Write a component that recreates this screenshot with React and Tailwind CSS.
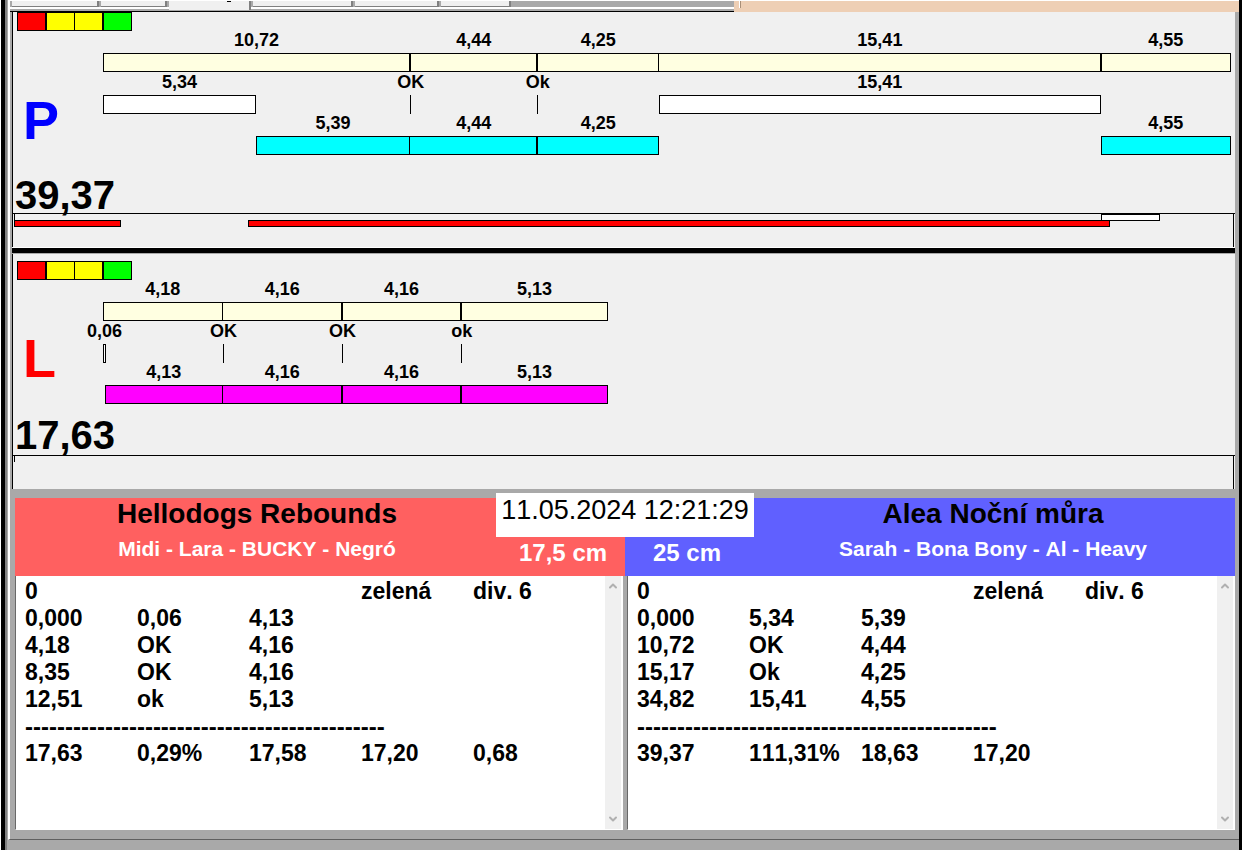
import { ChevronDown, ChevronUp } from "lucide-react";

const TOTAL_SECONDS = 39.37;
const STRIP_UNITS = 1220;

const DASHES = "-".repeat(45);

const lanes = [
  {
    name: "P",
    color: "text-[#0000ff]",
    letterSpace: "pt-16",
    lightSpace: "",
    total: "39,37",
    totalSpace: "h-[58px] pt-5",
    rows: [
      {
        fill: "bg-[#ffffe1]",
        items: [
          { seconds: 10.72, label: "10,72" },
          { seconds: 4.44, label: "4,44" },
          { seconds: 4.25, label: "4,25" },
          { seconds: 15.41, label: "15,41", joined: true },
          { seconds: 4.55, label: "4,55" },
        ],
      },
      {
        fill: "bg-white",
        items: [
          { seconds: 5.34, label: "5,34" },
          { seconds: 5.38, gap: true },
          { tick: true, label: "OK" },
          { seconds: 4.44, gap: true },
          { tick: true, label: "Ok" },
          { seconds: 4.25, gap: true },
          { seconds: 15.41, label: "15,41" },
        ],
      },
      {
        fill: "bg-[#00ffff]",
        items: [
          { seconds: 5.34, gap: true },
          { seconds: 5.38, label: "5,39" },
          { seconds: 4.44, label: "4,44", joined: true },
          { seconds: 4.25, label: "4,25" },
          { seconds: 15.41, gap: true },
          { seconds: 4.55, label: "4,55" },
        ],
      },
    ],
    upper: [{ start: 1088, end: 1147 }],
    lower: [
      { start: 0, end: 107 },
      { start: 234, end: 1097 },
    ],
  },
  {
    name: "L",
    color: "text-[#ff0000]",
    letterSpace: "pt-[53px]",
    lightSpace: "pt-[7px]",
    total: "17,63",
    totalSpace: "h-[51px] pt-[11px]",
    rows: [
      {
        fill: "bg-[#ffffe1]",
        items: [
          { seconds: 4.18, label: "4,18" },
          { seconds: 4.16, label: "4,16", joined: true },
          { seconds: 4.16, label: "4,16" },
          { seconds: 5.13, label: "5,13" },
        ],
      },
      {
        fill: "bg-white",
        items: [
          { seconds: 0.06, label: "0,06" },
          { seconds: 4.08, gap: true },
          { tick: true, label: "OK" },
          { seconds: 4.16, gap: true },
          { tick: true, label: "OK" },
          { seconds: 4.16, gap: true },
          { tick: true, label: "ok" },
        ],
      },
      {
        fill: "bg-[#ff00ff]",
        items: [
          { seconds: 0.06, gap: true },
          { seconds: 4.12, label: "4,13" },
          { seconds: 4.16, label: "4,16", joined: true },
          { seconds: 4.16, label: "4,16" },
          { seconds: 5.13, label: "5,13" },
        ],
      },
    ],
    upper: [],
    lower: [],
  },
];

const teams = [
  {
    name: "Hellodogs Rebounds",
    dogs: "Midi - Lara - BUCKY - Negró",
    jump: "17,5 cm",
    rows: [
      ["0", "", "", "zelená", "div. 6"],
      ["0,000", "0,06", "4,13", "", ""],
      ["4,18", "OK", "4,16", "", ""],
      ["8,35", "OK", "4,16", "", ""],
      ["12,51", "ok", "5,13", "", ""],
    ],
    totals: ["17,63", "0,29%", "17,58", "17,20", "0,68"],
  },
  {
    name: "Alea Noční můra",
    dogs: "Sarah - Bona Bony - Al - Heavy",
    jump: "25 cm",
    rows: [
      ["0", "", "", "zelená", "div. 6"],
      ["0,000", "5,34", "5,39", "", ""],
      ["10,72", "OK", "4,44", "", ""],
      ["15,17", "Ok", "4,25", "", ""],
      ["34,82", "15,41", "4,55", "", ""],
    ],
    totals: ["39,37", "111,31%", "18,63", "17,20", ""],
  },
];

function TabStrip() {
  const tab = "h-[6px] bg-[#f0f0f0] border-b border-r-2 border-[#808080]";
  return (
    <div className="flex h-3 border-t border-white">
      <div className="w-[724px] border-b border-black bg-[#a9a9a9]">
        <div className="flex h-[6px] gap-[2px] pl-[2px]">
          <div className={`${tab} w-[87px]`} />
          <div className={`${tab} w-[66px] border-r-0`} />
          <div className="h-[9px] w-[82px] border-r-2 border-[#808080] bg-[#f0f0f0] pl-[58px]">
            <div className="h-px w-1 bg-black" />
          </div>
          <div className={`${tab} w-[100px]`} />
          <div className={`${tab} w-[84px]`} />
          <div className={`${tab} w-[70px]`} />
        </div>
        <div className="h-[2px] bg-white" />
      </div>
      <div className="flex-1 bg-[#eecfb5] pl-[5px]">
        <div className="h-[7px] w-[2px] border-l border-white bg-[#a98f78]" />
      </div>
    </div>
  );
}

function Lights() {
  const light = "h-[19px] border border-black";
  return (
    <div className="flex h-[18px] pl-1">
      <div className={`${light} w-[29px] bg-[#ff0000]`} />
      <div className={`${light} w-[29px] bg-[#ffff00]`} />
      <div className={`${light} w-7 border-l-0 bg-[#ffff00]`} />
      <div className={`${light} w-[29px] bg-[#00ff00]`} />
    </div>
  );
}

function Segment({ item, fill, labelClass }) {
  const width = `${((item.seconds || 0) / TOTAL_SECONDS) * 100}%`;
  if (item.gap) return <div className="shrink-0" style={{ width }} />;

  if (item.tick) {
    return (
      <div className="-mr-px w-px shrink-0">
        <div className={`flex justify-center whitespace-nowrap ${labelClass}`}>
          <span>{item.label}</span>
        </div>
        <div className="h-[19px] bg-black" />
      </div>
    );
  }

  return (
    <div className="min-w-[3px] shrink-0" style={{ width }}>
      <div className={`flex justify-center whitespace-nowrap ${labelClass}`}>
        <span>{item.label}</span>
      </div>
      <div className={`h-[19px] border border-black ${item.joined ? "border-l-0" : ""} ${fill}`} />
    </div>
  );
}

function StripRow({ bars, fill }) {
  const percent = (units) => `${(units / STRIP_UNITS) * 100}%`;
  return (
    <div className="flex h-[7px]">
      {bars.map((bar, index) => (
        <div
          key={bar.start}
          className={`shrink-0 border border-black ${fill}`}
          style={{
            width: percent(bar.end - bar.start),
            marginLeft: percent(bar.start - (index ? bars[index - 1].end : 0)),
          }}
        />
      ))}
    </div>
  );
}

function Lane({ lane }) {
  return (
    <section className={`border-l border-black bg-[#f0f0f0] ${lane.lightSpace}`}>
      <Lights />
      <div className="flex pr-1">
        <div className={`h-[125px] w-[90px] shrink-0 pl-[10px] text-[54px] leading-[52px] ${lane.color} ${lane.letterSpace}`}>
          {lane.name}
        </div>
        <div className="min-w-0 flex-1 text-lg">
          {lane.rows.map((row, index) => (
            <div key={index} className="flex">
              {row.items.map((item, i) => (
                <Segment
                  key={i}
                  item={item}
                  fill={row.fill}
                  labelClass={index === 2 ? "h-[22px] leading-[18px]" : "h-[23px] leading-5"}
                />
              ))}
            </div>
          ))}
        </div>
      </div>
      <div className={`pl-[2px] text-[40px] leading-10 ${lane.totalSpace}`}>{lane.total}</div>
      <div className="h-[34px] border-t border-black px-px">
        <div className="h-[33px] border-r border-black">
          <div className="h-[6px] bg-[linear-gradient(#000,#000)] bg-[length:1px_100%] bg-no-repeat">
            <StripRow bars={lane.upper} fill="bg-white" />
          </div>
          <StripRow bars={lane.lower} fill="bg-[#ff0000]" />
        </div>
      </div>
    </section>
  );
}

function ResultList({ team }) {
  return (
    <div className="flex border-b border-l border-b-white border-l-[#696969] bg-white pr-[2px]">
      <div className="min-w-0 flex-1 overflow-hidden pl-[9px] pt-[2px]">
        <table className="w-[560px] table-fixed border-collapse text-[23px] leading-[27px]">
          <tbody>
            {team.rows.map((row, index) => (
              <tr key={index}>
                {row.map((cell, i) => (
                  <td key={i} className="p-0">{cell}</td>
                ))}
              </tr>
            ))}
            <tr>
              <td colSpan={5} className="h-[27px] p-0 text-2xl leading-[27px]">{DASHES}</td>
            </tr>
            <tr>
              {team.totals.map((cell, i) => (
                <td key={i} className="p-0">{cell}</td>
              ))}
            </tr>
          </tbody>
        </table>
      </div>
      <div className="flex w-4 flex-col items-center justify-between bg-[#f0f0f0] py-1 text-[#b0b0b0]">
        <button type="button" aria-label="Up">
          <ChevronUp className="h-3 w-3" strokeWidth={4} />
        </button>
        <button type="button" aria-label="Down">
          <ChevronDown className="h-3 w-3" strokeWidth={4} />
        </button>
      </div>
    </div>
  );
}

function TeamInfo({ team }) {
  return (
    <div className="flex-1 text-center">
      <h2 className="text-[28px] leading-8">{team.name}</h2>
      <p className="pt-1 text-[21px] leading-[30px] text-white">{team.dogs}</p>
    </div>
  );
}

export default function App() {
  const [left, right] = teams;
  return (
    <div className="flex min-h-screen border-l border-white bg-black pl-1 pr-[3px] font-['Liberation_Sans',Arial,sans-serif] font-bold text-black [font-kerning:none]">
      <div className="flex min-w-0 flex-1 flex-col border-l-2 border-[#808080] bg-[#a9a9a9] pl-px">
        <div className="flex flex-1 flex-col border-b border-l-2 border-b-[#606060] border-l-white">
          <TabStrip />
          <div className="flex flex-1 flex-col pb-[9px] pl-[2px] pr-1">
            {/* Timelines */}
            <Lane lane={lanes[0]} />
            <div className="h-[7px] border-b border-t border-b-[#a9a9a9] border-t-white bg-black" />
            <Lane lane={lanes[1]} />

            {/* Results */}
            <div className="flex flex-1 flex-col pl-[3px] pt-[9px]">
              <div className="relative grid h-[78px] grid-cols-2">
                <div className="flex bg-[#ff6060]">
                  <TeamInfo team={left} />
                  <div className="w-[126px] pl-5 pt-10 text-2xl leading-[30px] text-white">{left.jump}</div>
                </div>
                <div className="flex bg-[#6060ff]">
                  <div className="w-[126px] pl-7 pt-10 text-2xl leading-[30px] text-white">{right.jump}</div>
                  <TeamInfo team={right} />
                </div>
                <time className="absolute -top-[5px] left-1/2 h-11 w-[258px] -translate-x-1/2 bg-white text-center text-[27px] font-normal leading-[34px]">
                  11.05.2024 12:21:29
                </time>
              </div>
              <div className="grid flex-1 grid-cols-2 gap-1">
                <ResultList team={left} />
                <ResultList team={right} />
              </div>
            </div>
          </div>
        </div>
        <div className="h-[10px]" />
      </div>
    </div>
  );
}
